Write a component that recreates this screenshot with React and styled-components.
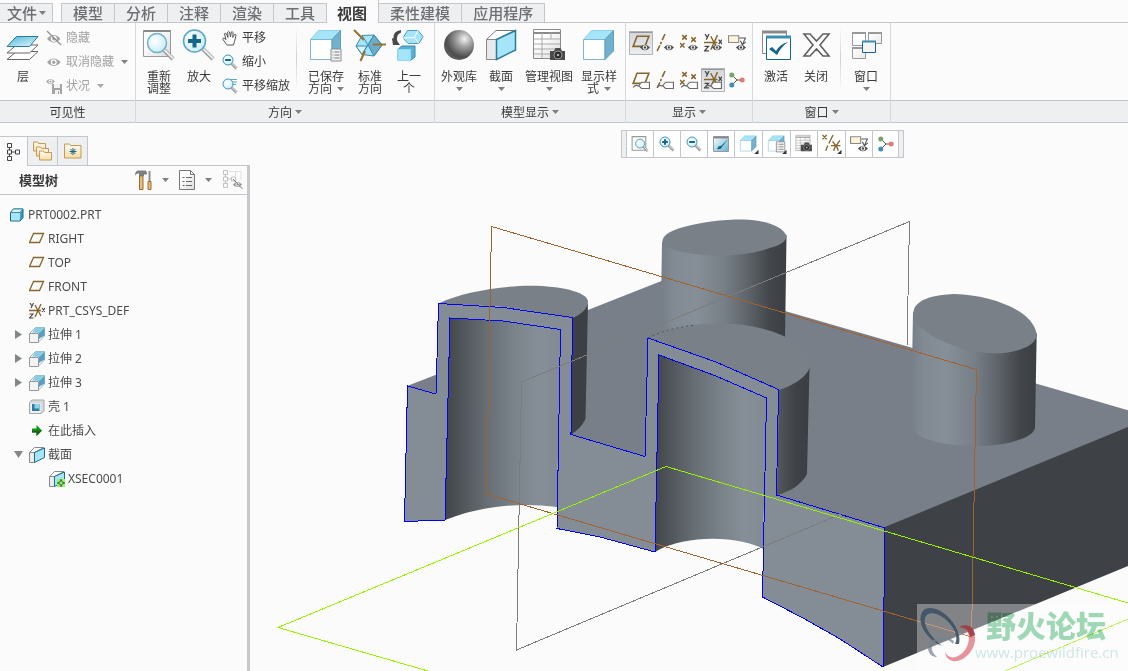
import React from "react";
import styled, { createGlobalStyle, css } from "styled-components";

const theme = {
  paper: "#fbfbfb",
  strip: "#edeff1",
  line: "#c3c7cb",
  text: "#3a3a3a",
  faded: "#a2a2a2",
  brown: "#87662c",
  blue: "#14678a",
  sky: "#a6e4f9"
};

const GlobalStyle = createGlobalStyle`
  *, *::before, *::after {
    box-sizing: border-box;
  }
  html, body, #root {
    height: 100%;
  }
  body {
    margin: 0;
    overflow: hidden;
    background: ${theme.paper};
    color: ${theme.text};
    font-family: "Noto Sans", "Noto Sans CJK SC", sans-serif;
    font-size: 12px;
  }
  button {
    margin: 0;
    padding: 0;
    border: 0;
    background: none;
    color: inherit;
    font: inherit;
    cursor: pointer;
  }
  svg {
    display: block;
    flex: none;
  }
`;

const Window = styled.div`
  display: flex;
  flex-direction: column;
  height: 100vh;
`;

const TabBar = styled.nav`
  display: flex;
  align-items: flex-end;
  height: 23px;
  border-bottom: 1px solid ${theme.line};
`;

const Tab = styled.button`
  height: 20px;
  margin-bottom: -1px;
  padding: 0 11px;
  border: 1px solid ${theme.line};
  border-left-width: ${props => (props.$first ? 1 : 0)}px;
  background: ${theme.strip};
  color: #6c6e72;
  font-size: 15px;
  font-weight: 500;
  line-height: 18px;
  white-space: nowrap;
  ${props =>
    props.$active &&
    css`
      height: 23px;
      padding: 2px 11px 0 10px;
      border-top: 0;
      border-bottom: 0;
      background: ${theme.paper};
      color: ${theme.text};
      font-weight: 700;
    `}
`;

const FileTab = styled(Tab)`
  display: flex;
  align-items: center;
  gap: 2px;
  margin-right: 8px;
  padding: 0 6px 0 7px;
`;

const Ribbon = styled.div`
  display: flex;
  flex: none;
  height: 100px;
`;

const Group = styled.section`
  display: flex;
  flex: ${props => (props.$width ? `0 0 ${props.$width}px` : "1 1 0")};
  flex-direction: column;
  border-right: ${props => (props.$width ? `1px solid #d6d9dc` : 0)};
`;

const GroupBody = styled.div`
  display: flex;
  flex: 1;
  padding: 3px 3px 0;
`;

const GroupLabel = styled.button`
  display: flex;
  align-items: center;
  justify-content: center;
  gap: 3px;
  height: 23px;
  border: solid ${theme.line};
  border-width: 1px 0;
  background: ${theme.strip};
`;

const BigButton = styled.button`
  display: flex;
  flex: none;
  flex-direction: column;
  align-items: center;
  width: ${props => props.$width}px;
  height: 72px;
  padding-top: 3px;
  line-height: 12px;
  white-space: nowrap;
`;

const BigIcon = styled.svg`
  width: 34px;
  height: 34px;
  margin-bottom: 8px;
`;

const Line = styled.span`
  display: flex;
  align-items: center;
  gap: 5px;
  min-height: 12px;
`;

const SmallList = styled.div`
  display: flex;
  flex-direction: column;
  padding: 0 2px 0 3px;
`;

const SmallButton = styled.button`
  display: flex;
  align-items: center;
  gap: 4px;
  height: 24px;
  color: ${props => (props.disabled ? theme.faded : "inherit")};
  line-height: 16px;
  white-space: nowrap;

  svg + svg {
    margin-left: 3px;
  }
`;

const Separator = styled.span`
  flex: none;
  width: 1px;
  height: 66px;
  margin: 0 4px;
  background: linear-gradient(${theme.paper}, #cfd2d5, ${theme.paper});
`;

const ToggleGrid = styled.div`
  display: grid;
  grid-template-columns: repeat(5, 24px);
  grid-auto-rows: 24px;
  row-gap: 13px;
  padding-top: 5px;
`;

const Toggle = styled.button`
  display: grid;
  place-items: center;
  ${props =>
    props.$on &&
    css`
      background: linear-gradient(#d3d6da, #ebedef);
      box-shadow: inset 0 0 0 1px #b4b7ba, inset 0 2px 0 #95989b;
    `}
`;

const Work = styled.div`
  display: flex;
  flex: 1;
  min-height: 0;
`;

const Sidebar = styled.aside`
  display: flex;
  flex: 0 0 250px;
  flex-direction: column;
  padding-top: 13px;
`;

const PanelTabs = styled.div`
  display: flex;
  height: 30px;
  border-bottom: 1px solid ${theme.line};
`;

const PanelTab = styled.button`
  display: grid;
  place-items: center;
  width: ${props => (props.$active ? 28 : 30)}px;
  height: ${props => (props.$active ? 30 : 29)}px;
  border-top: 1px solid ${theme.line};
  border-right: 1px solid ${theme.line};
  background: ${props => (props.$active ? theme.paper : theme.strip)};
`;

const Panel = styled.div`
  flex: 1;
  border-right: 3px solid #c6c8cb;
`;

const PanelHeader = styled.header`
  display: flex;
  align-items: center;
  height: 29px;
  padding: 0 3px 0 19px;
  border-bottom: 1px solid ${theme.line};

  h2 {
    flex: 1;
    margin: 0;
    font-size: 13px;
    font-weight: 700;
    line-height: 18px;
  }
`;

const HeaderButton = styled.button`
  display: flex;
  align-items: center;
  gap: 9px;
  margin-left: 10px;
`;

const Tree = styled.ul`
  margin: 0;
  padding: 8px 0 0;
  list-style: none;
`;

const TreeRow = styled.li`
  display: flex;
  align-items: center;
  height: 24px;
  padding-left: ${props => 9 + props.$depth * 20}px;
  color: #4c4c4c;
  line-height: 16px;
  gap: 3px;
`;

const Expander = styled.button`
  width: 10px;
  height: 10px;
  margin: 0 2px 0 -15px;
`;

const Viewport = styled.main`
  position: relative;
  flex: 1;
  min-width: 0;
  overflow: hidden;
`;

const Scene = styled.svg`
  width: 100%;
  height: 100%;
`;

const ViewBar = styled.div`
  position: absolute;
  top: 7px;
  left: 371px;
  display: flex;
  height: 28px;
  padding: 0 4px;
  border: 1px solid ${theme.line};
  background: ${theme.strip};
`;

const ViewButton = styled.button`
  display: grid;
  place-items: center;
  width: ${props => (props.$menu ? 28 : 27)}px;
  border-left: 1px solid ${theme.line};
  background: #fff;

  &:last-child {
    border-right: 1px solid ${theme.line};
  }
`;

const Watermark = styled.div`
  position: absolute;
  right: 0;
  bottom: 0;
  display: flex;
  width: 211px;
  height: 67px;
  background: rgba(255, 255, 255, 0.35);
`;

const WatermarkText = styled.div`
  margin-left: -2px;
  mix-blend-mode: multiply;
  white-space: nowrap;

  strong {
    display: block;
    padding: 3px 0 0 11px;
    color: #9fdab5;
    font-family: "Noto Sans CJK SC", sans-serif;
    font-size: 30px;
    font-weight: 900;
    line-height: 34px;
  }
  a {
    display: block;
    color: #d3e9ea;
    font-family: "Open Sans", sans-serif;
    font-size: 15px;
    line-height: 22px;
    text-decoration: none;
  }
`;

/* ---------- icons ---------- */

const Arrow = ({ color = "#7d7f82" }) => (
  <svg width="7" height="4" viewBox="0 0 7 4">
    <path d="M0 0h7L3.5 4z" fill={color} />
  </svg>
);

const Small = ({ size = 16, children }) => (
  <svg width={size} height={size} viewBox="0 0 16 16" fill="none">
    {children}
  </svg>
);

const EyeMark = ({ x = 0, y = 0, color = "#4b4b4b" }) => (
  <g transform={`translate(${x} ${y})`}>
    <path d="M0 3.500Q4.500-1.500 9 3.500Q4.500 8.500 0 3.500z" fill={color} />
    <circle cx="4.500" cy="3.500" r="2" fill="#fff" />
    <circle cx="4.500" cy="3.500" r="1.100" fill={color} />
  </g>
);

const TagMark = ({ x = 0, y = 0 }) => (
  <g transform={`translate(${x} ${y})`} fill="none" stroke="#6a6a6a">
    <path d="M-5 5q2.500-3 5-1" />
    <path d="M2.500 .5h7v5.500h-7L0 3.500z" fill="#fff" />
  </g>
);

const LensShape = ({ sign }) => (
  <g>
    <path d="M9.500 9.500l5 5" stroke="#9b9b9b" strokeWidth="2.600" />
    <path d="M10 9.500l4.800 4.700" stroke="#e8e8e8" strokeWidth="1" />
    <circle cx="6" cy="6" r="5" fill="url(#glass)" stroke="#4596b5" />
    {sign && <path d="M3.200 6h5.600" stroke={theme.blue} strokeWidth="2" />}
    {sign === "+" && <path d="M6 3.200v5.600" stroke={theme.blue} strokeWidth="2" />}
  </g>
);

const CubeShape = () => (
  <g strokeWidth="1">
    <path d="M1.500 10.500L9.500 1.500H31.500L23 10.500z" fill={theme.sky} stroke="#8fd0e8" />
    <path d="M1.500 10.500h21.500v20h-21.500z" fill="#fff" stroke="#7fb6cb" />
    <path d="M23 10.500L31.500 1.500V22L23 30.500z" fill="#72b0cd" stroke="#5d9fbf" />
  </g>
);

const ListShape = () => (
  <g>
    <path d="M.5 .5h10v12h-10z" fill="#f4f4f4" stroke="#8d8d8d" />
    <path d="M2 3.500h1M2 6.500h1M2 9.500h1M4 3.500h5M4 6.500h5M4 9.500h5" stroke="#777" />
  </g>
);

const TableShape = () => (
  <g>
    <path d="M.5 .5h27v29h-27z" fill="url(#silver)" stroke="#8a8a8a" />
    <path d="M1 4h26" stroke="#8a8a8a" strokeWidth="2" />
    <path d="M1 10h26M1 15h26M1 20h26M1 25h26M9 4v25M18 4v6" stroke="#a9a9a9" />
  </g>
);

const CameraShape = () => (
  <g>
    <path d="M0 3h4l1.500-3h5L12 3h3v9H0z" fill="#4a4a4a" />
    <circle cx="8" cy="7" r="4" fill="#2a2a2a" stroke="#9a9a9a" />
    <circle cx="8" cy="7" r="1.300" fill="#aaa" />
  </g>
);

const PlaneShape = () => (
  <path d="M4.500 2h10.500l-3.500 9H1z" stroke={theme.brown} strokeWidth="1.400" fill="none" />
);

const CsysShape = () => (
  <g fill="none">
    <path
      d="M1 0l1.500 2.500M4.500 0L2 5M.5 11h3.500L.5 15H4.500M13 5l3 4M16 5l-3 4"
      stroke="#444"
      strokeWidth="1.100"
    />
    <path d="M0 7.500h12M6 2l3 5.500L6 14M12 1L9 7.500L12 13" stroke={theme.brown} strokeWidth="1.300" />
  </g>
);

const StarsShape = () => (
  <path
    d="M2 1l4 4M6 1L2 5M10 3l4 4M14 3l-4 4M0 8l4 4M4 8l-4 4"
    stroke={theme.brown}
    strokeWidth="1.300"
  />
);

const AxisShape = () => (
  <path d="M8 0L5.500 5.500M4.800 7L4 9M3.500 10L1 15" stroke={theme.brown} strokeWidth="1.400" />
);

const NoteShape = () => (
  <g>
    <path d="M.5 1.500h9v6h-9z" fill="#fff4d9" stroke="#8a8a8a" />
    <path d="M10 3.500h5.500L13 9M11 6l1.800 3.500L16 7" stroke="#555" fill="none" />
  </g>
);

const NodesShape = () => (
  <g>
    <path d="M3 3l5 5M3 13l5-5M8 8h5" stroke="#555" />
    <circle cx="2.800" cy="3" r="2.500" fill="#76a565" />
    <circle cx="13.200" cy="8" r="2.500" fill="#e07a74" />
    <circle cx="2.800" cy="13" r="2.500" fill="#3f8fb5" />
  </g>
);

const HiddenIcon = () => (
  <Small>
    <g transform="translate(1 2) scale(1.5)">
      <EyeMark y={1} color="#a3a3a3" />
    </g>
    <path d="M1 1l14 14" stroke="#8f8f8f" strokeWidth="1.300" />
  </Small>
);

const UnhideIcon = () => (
  <Small>
    <g transform="translate(1 3) scale(1.5)">
      <EyeMark color="#a3a3a3" />
    </g>
  </Small>
);

const StatusIcon = () => (
  <Small>
    <EyeMark color="#a3a3a3" />
    <path d="M6 6h10v10H6z" fill="#a3a3a3" />
    <path d="M8 6h6v4H8zM9 12h5v4H9z" fill="#f2f2f2" />
    <path d="M12 13h1v3h-1z" fill="#a3a3a3" />
  </Small>
);

const HandIcon = () => (
  <Small>
    <path
      d="M4.500 14.500L1 9.500Q.5 8 2 8l2 1.500L2.500 4Q3 2.500 4.200 3.500L6 7.500 5.700 2Q6.500 .5 7.500 2L8.500 7 9.300 2Q10.500 1 11 2.500L10.800 7.500 12.500 4.500Q14 4 14 5.500L12.500 11.500 11.500 15H5z"
      fill="#fff"
      stroke="#555"
    />
  </Small>
);

const PanZoomIcon = () => (
  <Small>
    <LensShape />
    <path d="M9 1.500h6M11 4h4M11 6.500h3" stroke="#5aa7c7" />
  </Small>
);

const ZoomOutIcon = () => (
  <Small>
    <LensShape sign="-" />
  </Small>
);

const LayersArt = () => (
  <>
    <path d="M10.500 22.500h21.500L23.500 30.500H1z" fill="#fff" stroke="#666" />
    <path d="M10.500 16h21.500L23.500 24H1z" fill="#fff" stroke="#666" />
    <path d="M10.500 7.500h21.500L23.500 17.500H1z" fill="url(#sheet)" stroke="#2b7a9b" />
  </>
);

const RefitArt = () => (
  <>
    <path d="M1.500 1.500h27v26h-27z" fill="url(#silver)" stroke="#999" />
    <path d="M1.500 2h27" stroke="#888" strokeWidth="2" />
    <path d="M21 20l10 10" stroke="#9a9a9a" strokeWidth="4" />
    <path d="M21.500 20l9.500 9.500" stroke="#eee" strokeWidth="2" />
    <circle cx="15" cy="14" r="9.500" fill="url(#glass)" stroke="#6db1cd" strokeWidth="1.500" />
  </>
);

const ZoomInArt = () => (
  <>
    <path d="M21 20l10 10" stroke="#9a9a9a" strokeWidth="4" />
    <path d="M21.500 20l9.500 9.500" stroke="#eee" strokeWidth="2" />
    <circle cx="12.500" cy="12" r="11" fill="url(#glass)" stroke="#5ba6c5" strokeWidth="1.500" />
    <path d="M12.500 5.500v13M6 12h13" stroke={theme.blue} strokeWidth="4" />
  </>
);

const SavedViewArt = () => (
  <>
    <CubeShape />
    <g transform="translate(21.500 19.500)">
      <ListShape />
    </g>
  </>
);

const StandardViewArt = () => (
  <>
    <path d="M3 17L9 6.500L21 6L29 16L21 27L9 25.500z" fill={theme.sky} stroke="#3b8aa9" />
    <path d="M3 17L14 17L9 25.500z" fill="#d8f5fd" stroke="#3b8aa9" />
    <path d="M9 6.500L15 16L9 25.500M15 16L21 6" fill="none" stroke="#3b8aa9" />
    <path d="M21 6L29 16L21 27L15 16z" fill="#6badcb" stroke="#3b8aa9" />
    <path d="M1 1l10 10M20 15.500h13M12 22L7.500 32" stroke="#9a7635" strokeWidth="2.200" />
  </>
);

const PreviousArt = () => (
  <>
    <path d="M9 1Q1 2 1.500 9L0 9.500L1 16H8L5.500 12.500Q3.500 6 9 3.500z" fill="#4a4a4a" />
    <path d="M11 9L15.500 1.500L26 1.500L31 7.500L27 14.500L16 14.500z" fill={theme.sky} stroke="#4a9dbd" />
    <path d="M11 9L22.500 8.500L26 1.500M22.500 8.500L27 14.500" stroke="#fff" fill="none" />
    <path d="M6 20.500L9.500 17H23V28L18.500 31.500H6z" fill="#58b3d3" stroke="#3b8aa9" />
    <path d="M6 20.500H18.500V31.500H6z" fill={theme.sky} stroke="#8fdcf5" />
  </>
);

const SphereArt = () => <circle cx="17" cy="16" r="15" fill="url(#ball)" />;

const SectionArt = () => (
  <>
    <path d="M2.500 10.500L12 1.500H31L12.500 10.500z" fill="#fff" stroke="#777" />
    <path d="M2.500 10.500h10v20h-10z" fill="#e9e9e9" stroke="#888" />
    <path d="M12.500 10.500L31.500 1.500V21L12.500 30.500z" fill={theme.sky} stroke="#2c7a9a" strokeWidth="1.500" />
  </>
);

const ManageArt = () => (
  <>
    <g transform="translate(1 0)">
      <TableShape />
    </g>
    <g transform="translate(18 19)">
      <CameraShape />
    </g>
  </>
);

const ActivateArt = () => (
  <>
    <path d="M3.500 2.500h24v22h-24z" fill="#fff" stroke="#888" />
    <path d="M3 3h25" stroke="#8a8a8a" strokeWidth="3" />
    <path d="M7.500 7.500h24v23h-24z" fill="#fff" stroke={theme.blue} />
    <path d="M7 8h25" stroke="#3a8fb1" strokeWidth="3" />
    <path d="M10 20l3-2 4 4Q21 15 29 13Q22 18 18 26z" fill={theme.blue} />
  </>
);

const CloseArt = () => (
  <path
    d="M5 5h6L17.500 12 24 5h6L21 16 30 27h-6L17.500 20 11 27H5L14 16z"
    fill="#fff"
    stroke="#606060"
    strokeWidth="1.600"
  />
);

const WindowsArt = () => (
  <>
    <path d="M3.500 3.500h13v13h-13zM19.500 3.500h13v11h-13zM3.500 18.500h13v11h-13z" fill="url(#silver)" stroke="#999" />
    <path d="M3 4h14M19 4h14M3 19h14" stroke="#999" strokeWidth="2" />
    <path d="M13.500 12.500h13v11h-13z" fill="#f4f4f4" stroke={theme.blue} />
    <path d="M13 12.500h14" stroke="#3a8fb1" strokeWidth="2" />
  </>
);

const withEye = Shape => (
  <Small size={18}>
    <Shape />
    <EyeMark x={7} y={8.5} />
  </Small>
);

const withTag = Shape => (
  <Small size={18}>
    <Shape />
    <TagMark x={6} y={9.5} />
  </Small>
);

const nodes = (
  <Small>
    <NodesShape />
  </Small>
);

const Corner = () => <path d="M18 19v-4l-4 4z" fill="#333" />;

const ViewSvg = ({ children }) => (
  <svg width="20" height="20" viewBox="0 0 18 19" fill="none">
    {children}
  </svg>
);

const viewButtons = [
  {
    label: "重新调整",
    icon: (
      <ViewSvg>
        <path d="M1.500 2.500h13v13h-13z" fill="#fff" stroke="#999" />
        <g transform="translate(4 4) scale(0.850)">
          <LensShape />
        </g>
      </ViewSvg>
    )
  },
  { label: "放大", icon: <Small><LensShape sign="+" /></Small> },
  { label: "缩小", icon: <Small><LensShape sign="-" /></Small> },
  {
    label: "重画",
    icon: (
      <Small>
        <path d="M.5 .5h15v15H.5z" fill="url(#repaint)" stroke="#999" />
        <path d="M1 1.500h14" stroke="#888" strokeWidth="2" />
        <path d="M4 13Q6 9 8 10L15 3L9 11Q8 14 4 13z" fill={theme.blue} />
      </Small>
    )
  },
  {
    label: "显示样式",
    menu: true,
    icon: (
      <ViewSvg>
        <g transform="translate(0 1) scale(0.500)">
          <CubeShape />
        </g>
        <Corner />
      </ViewSvg>
    )
  },
  {
    label: "已保存方向",
    menu: true,
    icon: (
      <ViewSvg>
        <g transform="translate(0 1) scale(0.500)">
          <CubeShape />
        </g>
        <g transform="translate(8 7) scale(0.800)">
          <ListShape />
        </g>
        <Corner />
      </ViewSvg>
    )
  },
  {
    label: "视图管理器",
    icon: (
      <ViewSvg>
        <g transform="translate(1 1) scale(0.500)">
          <TableShape />
        </g>
        <g transform="translate(6 8) scale(0.700)">
          <CameraShape />
        </g>
      </ViewSvg>
    )
  },
  {
    label: "基准显示过滤器",
    menu: true,
    icon: (
      <ViewSvg>
        <path
          d="M0 1l4 4M4 1L0 5M10 1L6 9M5 11l-2 5M8 11h9M9.500 7l3 4-2 5M16.500 6L13 11l2 5"
          stroke={theme.brown}
          strokeWidth="1.300"
        />
        <Corner />
      </ViewSvg>
    )
  },
  { label: "注释显示", icon: withEye(NoteShape) },
  { label: "旋转中心", icon: nodes }
];

const toggles = [
  { label: "平面显示", icon: withEye(PlaneShape), on: true },
  { label: "轴显示", icon: withEye(AxisShape) },
  { label: "点显示", icon: withEye(StarsShape) },
  { label: "坐标系显示", icon: withEye(CsysShape) },
  { label: "注释显示", icon: withEye(NoteShape) },
  { label: "平面标记显示", icon: withTag(PlaneShape) },
  { label: "轴标记显示", icon: withTag(AxisShape) },
  { label: "点标记显示", icon: withTag(StarsShape) },
  { label: "坐标系标记显示", icon: withTag(CsysShape), on: true },
  { label: "旋转中心", icon: nodes }
];

const TreePart = () => (
  <Small>
    <path d="M1.500 5.500L4.500 2H14V10.500L11 14H1.500z" fill="#3c9dc2" stroke={theme.blue} />
    <path d="M1.500 5.500L4.500 2H14L11 5.500z" fill="#d9f6ff" stroke="#3b8aa9" />
    <path d="M2 6h9v7.500H2z" fill={theme.sky} />
  </Small>
);

const TreePlane = () => (
  <Small>
    <path d="M4.500 2.500h10l-4 9h-10z" stroke={theme.brown} strokeWidth="1.300" />
  </Small>
);

const TreeExtrude = () => (
  <Small>
    <path d="M.5 6.500L6.500 .5H15.500V9L9.500 15z" fill="#fff" stroke="#8bb8ca" />
    <path d="M3 5.500L7 .5H15L10 6z" fill="#8ccbe5" />
    <path d="M10 6L15.500 .5V8.500L10 12z" fill="#5a9fc0" />
    <path d="M.5 6.500h9v9h-9z" fill="#f3f3f3" stroke="#999" />
  </Small>
);

const TreeShell = () => (
  <Small>
    <path d="M.5 3.500L3 1H15V12L12 14.500H.5z" fill="#d7dadc" stroke="#a5a8aa" />
    <path d="M1.500 4.500h10v9.500h-10z" fill="#f2f2f2" />
    <path d="M3 5h7.500v7H3z" fill="#2c7fa3" />
    <path d="M5.500 5h5v4.500h-5z" fill="#8fd0ea" />
  </Small>
);

const TreeInsert = () => (
  <Small>
    <path d="M3 5.500h4.500V2L13 7.500 7.500 13V9.500H3z" fill="#0b9a0b" />
    <path d="M3 7.500h10L7.500 13V9.500H3z" fill="#1c5f1c" />
  </Small>
);

const TreeSection = ({ mark }) => (
  <Small>
    <path d="M.5 5.500L5.500 .5H15L5.500 5.500z" fill="#fff" stroke="#8b8b8b" />
    <path d="M.5 5.500h5v10h-5z" fill="#ececec" stroke="#8b8b8b" />
    <path d="M5.500 5.500L15.500 1V10.500L5.500 15.500z" fill={theme.sky} stroke="#1c6c8e" />
    {mark && (
      <g>
        <path d="M8 8h8v8H8z" fill="#9bef6c" />
        <path d="M12 9.500l2.500 2.500-2.500 2.500-2.500-2.500zM12 8v2M12 14v2M8 12h2M14 12h2" stroke="#22552a" />
      </g>
    )}
  </Small>
);

const TreeCsys = () => (
  <Small>
    <CsysShape />
  </Small>
);

const FolderShape = () => (
  <path d="M.5 2.500V1h4l1 1.500H12.500V10H.5z" fill="url(#folder)" stroke="#c19b57" />
);

const BranchShape = ({ color }) => (
  <path
    d="M2.500 .5h4v4h-4zM2.500 7h4v4h-4zM2.500 13.500h4v4h-4zM10.500 7h4v4h-4zM4.500 4.500v2.500M4.500 11v2.500M6.500 9h4"
    stroke={color}
  />
);

const treeRows = [
  { name: "PRT0002.PRT", depth: 0, icon: <TreePart /> },
  { name: "RIGHT", depth: 1, icon: <TreePlane /> },
  { name: "TOP", depth: 1, icon: <TreePlane /> },
  { name: "FRONT", depth: 1, icon: <TreePlane /> },
  { name: "PRT_CSYS_DEF", depth: 1, icon: <TreeCsys /> },
  { name: "拉伸 1", depth: 1, icon: <TreeExtrude />, toggle: "closed" },
  { name: "拉伸 2", depth: 1, icon: <TreeExtrude />, toggle: "closed" },
  { name: "拉伸 3", depth: 1, icon: <TreeExtrude />, toggle: "closed" },
  { name: "壳 1", depth: 1, icon: <TreeShell /> },
  { name: "在此插入", depth: 1, icon: <TreeInsert /> },
  { name: "截面", depth: 1, icon: <TreeSection />, toggle: "open" },
  { name: "XSEC0001", depth: 2, icon: <TreeSection mark /> }
];

const Gradients = () => (
  <svg width="0" height="0" aria-hidden="true">
    <defs>
      <radialGradient id="glass" cx="0.400" cy="0.400" r="0.700">
        <stop offset="0" stopColor="#fff" />
        <stop offset="1" stopColor="#c4ebf8" />
      </radialGradient>
      <radialGradient id="ball" cx="0.680" cy="0.300" r="0.750">
        <stop offset="0" stopColor="#f4f4f4" />
        <stop offset="0.350" stopColor="#a0a0a0" />
        <stop offset="0.800" stopColor="#4d4d4d" />
        <stop offset="1" stopColor="#5e5e5e" />
      </radialGradient>
      <linearGradient id="silver" x1="0" y1="0" x2="1" y2="1">
        <stop offset="0.300" stopColor="#fff" />
        <stop offset="1" stopColor="#dcdcdc" />
      </linearGradient>
      <linearGradient id="sheet" x1="0" y1="0" x2="1" y2="1">
        <stop offset="0" stopColor="#4db5da" />
        <stop offset="1" stopColor="#e4f8fe" />
      </linearGradient>
      <linearGradient id="repaint" x1="0" y1="0" x2="1" y2="1">
        <stop offset="0" stopColor="#fff" />
        <stop offset="1" stopColor="#5fb3d2" />
      </linearGradient>
      <linearGradient id="folder" x1="0" y1="0" x2="0" y2="1">
        <stop offset="0" stopColor="#fffaf0" />
        <stop offset="1" stopColor="#f8dda6" />
      </linearGradient>
    </defs>
  </svg>
);

/* ---------- the part in the viewport ---------- */

const Shade = ({ id, from, to, stops }) => (
  <linearGradient id={id} gradientUnits="userSpaceOnUse" x1={from} y1="0" x2={to} y2="0">
    {stops.map(([offset, color]) => (
      <stop key={offset} offset={offset} stopColor={color} />
    ))}
  </linearGradient>
);

const outer = [
  [0, "#767e86"],
  [0.1, "#828a93"],
  [0.28, "#868e97"],
  [0.5, "#777f87"],
  [0.68, "#5f656b"],
  [0.86, "#43474c"],
  [1, "#3b3e42"]
];

const inner = [
  [0, "#42464a"],
  [0.12, "#4e5357"],
  [0.35, "#666d73"],
  [0.6, "#7a828a"],
  [0.8, "#868e97"],
  [1, "#828a93"]
];

const Model = () => (
  <Scene viewBox="250 123 878 548" preserveAspectRatio="xMinYMin slice" fill="none">
    <defs>
      <Shade id="back" from={661} to={787} stops={outer} />
      <Shade id="right" from={911} to={1037} stops={outer} />
      <Shade id="boreA" from={446} to={560} stops={inner} />
      <Shade id="boreB" from={655} to={766} stops={inner} />
      <Shade id="stub" from={777} to={809} stops={[[0, "#53585d"], [0.6, "#3e4145"], [1, "#3b3e42"]]} />
    </defs>

    {/* block: top face and dark side */}
    <path d="M407 386L438 374V400z" fill="#797f88" />
    <path d="M565 319L669 278L785 311L1300 460V500L885 528L776 500L645 458L566 436z" fill="#797f88" />
    <path d="M885 527L1128 427L1300 356V496L1128 566L883 667z" fill="#3e4146" />

    {/* back cylinder */}
    <path d="M662 242L660.500 340H785L786.500 235z" fill="url(#back)" />
    <path
      d="M662.300 243C662 236 668 232 680 228C700 222 722 219.500 743 219.500C764 220 783 226 786.500 236C786 242 780 245 773 247C757 253 738 255.500 720 255.500C692 255 667 251 662.300 243z"
      fill="#7a8088"
    />

    {/* right cylinder */}
    <path d="M913 312L911 425C912 439 945 446 976 446C1007 446 1033 438 1035 428L1036.700 333z" fill="url(#right)" />
    <path
      d="M913.300 314C913 303 925 295 955 294C990 295 1034 310 1036.700 335C1036 346 1017 353 996 353.500C962 353 915 334 913.300 314z"
      fill="#7a8088"
    />

    {/* cut cylinder on the left */}
    <path d="M572 317C580 313 588 309 588 300L585.500 419C582 426 577 431 571 434.500z" fill="#3c3f43" />
    <path
      d="M438.500 303.500C462 292 500 286 530 285.700C560 285.500 587 292 588 301C588 308 582 314 572.500 318L503 307z"
      fill="#7a8088"
    />

    {/* cut cylinder in the middle */}
    <path d="M779 389.500C793 385 808 376 809.500 367L807 474C802 484 790 492 777 495z" fill="url(#stub)" />
    <path
      d="M648 338C668 328 692 323.500 722 323.300C752 324 778 331 797 343C806 351 810 360 809 367C808 376 793 386 778.500 390L716 362z"
      fill="#7a8088"
    />
    <path d="M648 338C662 331 678 327 695 325" stroke="#52565b" strokeDasharray="2 3" />

    {/* bores */}
    <path d="M450 318L503 321L560.500 329.500L557 507C520 502 480 506 445 520z" fill="url(#boreA)" />
    <path d="M659 355L716 376L766.500 398L763 549C745 538 690 532 655 552z" fill="url(#boreB)" />

    {/* section face */}
    <path
      d="M438.500 303.500L503 307.500L572.500 317.500L571 434.500L645 456.500L648 338L716 362L778.500 389.500L776.500 495L885 528L883 667L840 639L803 618L762.500 597L766.500 398L716 376L659 355L655 552L600 537L557 528.500L560.500 329.500L503 321L450 318L445 520L404.500 521.500L407.500 386L436 394z"
      fill="#848c95"
      stroke="#0000f2"
      shapeRendering="crispEdges"
    />

    {/* datum planes */}
    <g shapeRendering="crispEdges">
      <path d="M909.500 221.500L521.500 382L516.500 650L834 517" stroke="#7c7c7c" />
      <path d="M909.500 221.500L907 346" stroke="#7c7c7c" />
      <path d="M907 346L904.500 488L834 517" stroke="#7c7f83" />
      <path d="M491.500 226.500L976.500 369.500L971.500 637L486.500 494z" stroke="#a0632d" />
      <path d="M1128 603L666 466.500L278 627.500L428 671M1005 671L1128 619" stroke="#99f000" />
    </g>
  </Scene>
);

const WatermarkLogo = () => (
  <svg width="60" height="67" viewBox="0 0 60 67" fill="none">
    <path
      d="M42 40C46 26 28 4 13 4C2 4 1 18 8 28C12 34 18 39 25 42C14 33 6 22 8 14C11 5 25 10 33 20C39 27 41 34 38 40z"
      fill="#3d5266"
      opacity="0.900"
    />
    <path
      d="M42 23C50 19 59 24 58 36C57 50 42 61 33 56C30 54 28 52 28.500 48C31 56 41 55 48 46C54 38 54 24 42 23z"
      fill="#e0707a"
      opacity="0.750"
    />
    <path d="M42 23C50 19 57 22 58 31L53 33Q52 24 42 23z" fill="#9c3038" opacity="0.800" />
    <path d="M37 37C25 29 11 35 11 45C12 51 16 53 20 53C13 47 13 41 20 37C26 34 32 35 36 40z" fill="#728290" opacity="0.700" />
  </svg>
);

const Big = ({ width, art, lines, arrow }) => (
  <BigButton $width={width}>
    <BigIcon viewBox="0 0 34 34" fill="none">
      {art}
    </BigIcon>
    {lines.map((line, i) => (
      <Line key={line}>
        {line}
        {arrow === "inline" && i === lines.length - 1 && <Arrow />}
      </Line>
    ))}
    {arrow === "below" && (
      <Line>
        <Arrow />
      </Line>
    )}
  </BigButton>
);

const tabs = ["模型", "分析", "注释", "渲染", "工具", "视图", "柔性建模", "应用程序"];

const App = () => (
  <Window>
    <GlobalStyle />
    <TabBar>
      <FileTab>
        文件 <Arrow />
      </FileTab>
      {tabs.map((tab, i) => (
        <Tab key={tab} $first={i === 0} $active={tab === "视图"}>
          {tab}
        </Tab>
      ))}
    </TabBar>

    <Ribbon>
      <Group $width={136}>
        <GroupBody>
          <Big width={40} art={<LayersArt />} lines={["层"]} />
          <SmallList>
            <SmallButton disabled>
              <HiddenIcon /> 隐藏
            </SmallButton>
            <SmallButton disabled>
              <UnhideIcon /> 取消隐藏 <Arrow />
            </SmallButton>
            <SmallButton disabled>
              <StatusIcon /> 状况 <Arrow color="#a9a9a9" />
            </SmallButton>
          </SmallList>
        </GroupBody>
        <GroupLabel>可见性</GroupLabel>
      </Group>

      <Group $width={299}>
        <GroupBody>
          <Big width={40} art={<RefitArt />} lines={["重新", "调整"]} />
          <Big width={40} art={<ZoomInArt />} lines={["放大"]} />
          <SmallList>
            <SmallButton>
              <HandIcon /> 平移
            </SmallButton>
            <SmallButton>
              <ZoomOutIcon /> 缩小
            </SmallButton>
            <SmallButton>
              <PanZoomIcon /> 平移缩放
            </SmallButton>
          </SmallList>
          <Separator />
          <Big width={50} art={<SavedViewArt />} lines={["已保存", "方向"]} arrow="inline" />
          <Big width={38} art={<StandardViewArt />} lines={["标准", "方向"]} />
          <Big width={40} art={<PreviousArt />} lines={["上一", "个"]} />
        </GroupBody>
        <GroupLabel>
          方向 <Arrow />
        </GroupLabel>
      </Group>

      <Group $width={191}>
        <GroupBody>
          <Big width={42} art={<SphereArt />} lines={["外观库"]} arrow="below" />
          <Big width={42} art={<SectionArt />} lines={["截面"]} arrow="below" />
          <Big width={54} art={<ManageArt />} lines={["管理视图"]} arrow="below" />
          <Big width={46} art={<CubeShape />} lines={["显示样", "式"]} arrow="inline" />
        </GroupBody>
        <GroupLabel>
          模型显示 <Arrow />
        </GroupLabel>
      </Group>

      <Group $width={127}>
        <GroupBody>
          <ToggleGrid>
            {toggles.map(toggle => (
              <Toggle key={toggle.label} aria-label={toggle.label} $on={toggle.on}>
                {toggle.icon}
              </Toggle>
            ))}
          </ToggleGrid>
        </GroupBody>
        <GroupLabel>
          显示 <Arrow />
        </GroupLabel>
      </Group>

      <Group $width={138}>
        <GroupBody>
          <Big width={40} art={<ActivateArt />} lines={["激活"]} />
          <Big width={40} art={<CloseArt />} lines={["关闭"]} />
          <Separator />
          <Big width={42} art={<WindowsArt />} lines={["窗口"]} arrow="below" />
        </GroupBody>
        <GroupLabel>
          窗口 <Arrow />
        </GroupLabel>
      </Group>

      <Group>
        <GroupBody />
        <GroupLabel as="div" />
      </Group>
    </Ribbon>

    <Work>
      <Sidebar>
        <PanelTabs>
          <PanelTab $active aria-label="模型树">
            <svg width="18" height="18" viewBox="0 0 18 18" fill="none">
              <BranchShape color="#444" />
            </svg>
          </PanelTab>
          <PanelTab aria-label="文件夹浏览器">
            <svg width="20" height="20" viewBox="0 0 20 20" fill="none">
              <FolderShape />
              <g transform="translate(3 5)">
                <FolderShape />
              </g>
              <g transform="translate(6 9)">
                <FolderShape />
              </g>
            </svg>
          </PanelTab>
          <PanelTab aria-label="收藏夹">
            <svg width="18" height="18" viewBox="0 0 18 18" fill="none">
              <path d="M.5 3.500V2h5l1 1.500h10.500V16H.5z" fill="url(#folder)" stroke="#c19b57" />
              <path d="M9 6v7M5.500 9.500h7M6.500 7l5 5M11.500 7l-5 5" stroke={theme.blue} />
            </svg>
          </PanelTab>
        </PanelTabs>
        <Panel>
          <PanelHeader>
            <h2>模型树</h2>
            <HeaderButton aria-label="设置">
              <svg width="18" height="20" viewBox="0 0 18 20" fill="none">
                <path d="M0 5.500Q0 1 3 .5h7.500q1.500 .5 1.500 4H9v1.500H4V3.500Q1.500 3 0 5.500z" fill="#7c7f84" />
                <path d="M4.500 6h3.500v13.500H4.500z" fill="#e6bd7e" stroke="#9b6f30" />
                <path d="M14.500 1v11" stroke="#8a8d90" strokeWidth="2" />
                <path d="M13 11.500h3v8H13z" fill="#e6bd7e" stroke="#9b6f30" />
              </svg>
              <Arrow />
            </HeaderButton>
            <HeaderButton aria-label="显示">
              <svg width="17" height="20" viewBox="0 0 17 20" fill="none">
                <path d="M.5 .5h11l4 4v15H.5z" fill="url(#silver)" stroke="#777" />
                <path d="M11.500 .5v4h4" stroke="#777" />
                <path d="M3.500 7.500h2M3.500 11.500h2M3.500 15.500h2M7 7.500h6M7 11.500h6M7 15.500h6" stroke="#666" />
              </svg>
              <Arrow />
            </HeaderButton>
            <HeaderButton aria-label="树过滤器" disabled>
              <svg width="22" height="20" viewBox="1 0 22 20" fill="none">
                <BranchShape color="#bfc1c3" />
                <path d="M8 1.500h12v9M14.500 1.500v5" stroke="#e0e0e0" />
                <EyeMark x={12} y={11} color="#8d8d8d" />
                <path d="M12 9l9.500 10" stroke="#777" />
              </svg>
            </HeaderButton>
          </PanelHeader>
          <Tree>
            {treeRows.map(row => (
              <TreeRow key={row.name} $depth={row.depth}>
                {row.toggle && (
                  <Expander aria-label={row.toggle === "open" ? "折叠" : "展开"}>
                    <svg width="10" height="10" viewBox="0 0 10 10">
                      <path d={row.toggle === "open" ? "M0 1h9L4.500 8z" : "M1 0l7 4.500L1 9z"} fill="#858688" />
                    </svg>
                  </Expander>
                )}
                {row.icon}
                {row.name}
              </TreeRow>
            ))}
          </Tree>
        </Panel>
      </Sidebar>

      <Viewport>
        <Model />
        <ViewBar>
          {viewButtons.map(button => (
            <ViewButton key={button.label} aria-label={button.label} $menu={button.menu}>
              {button.icon}
            </ViewButton>
          ))}
        </ViewBar>
        <Watermark>
          <WatermarkLogo />
          <WatermarkText>
            <strong>野火论坛</strong>
            <a href="#forum">www.proewildfire.cn</a>
          </WatermarkText>
        </Watermark>
      </Viewport>
    </Work>
    <Gradients />
  </Window>
);

export default App;
